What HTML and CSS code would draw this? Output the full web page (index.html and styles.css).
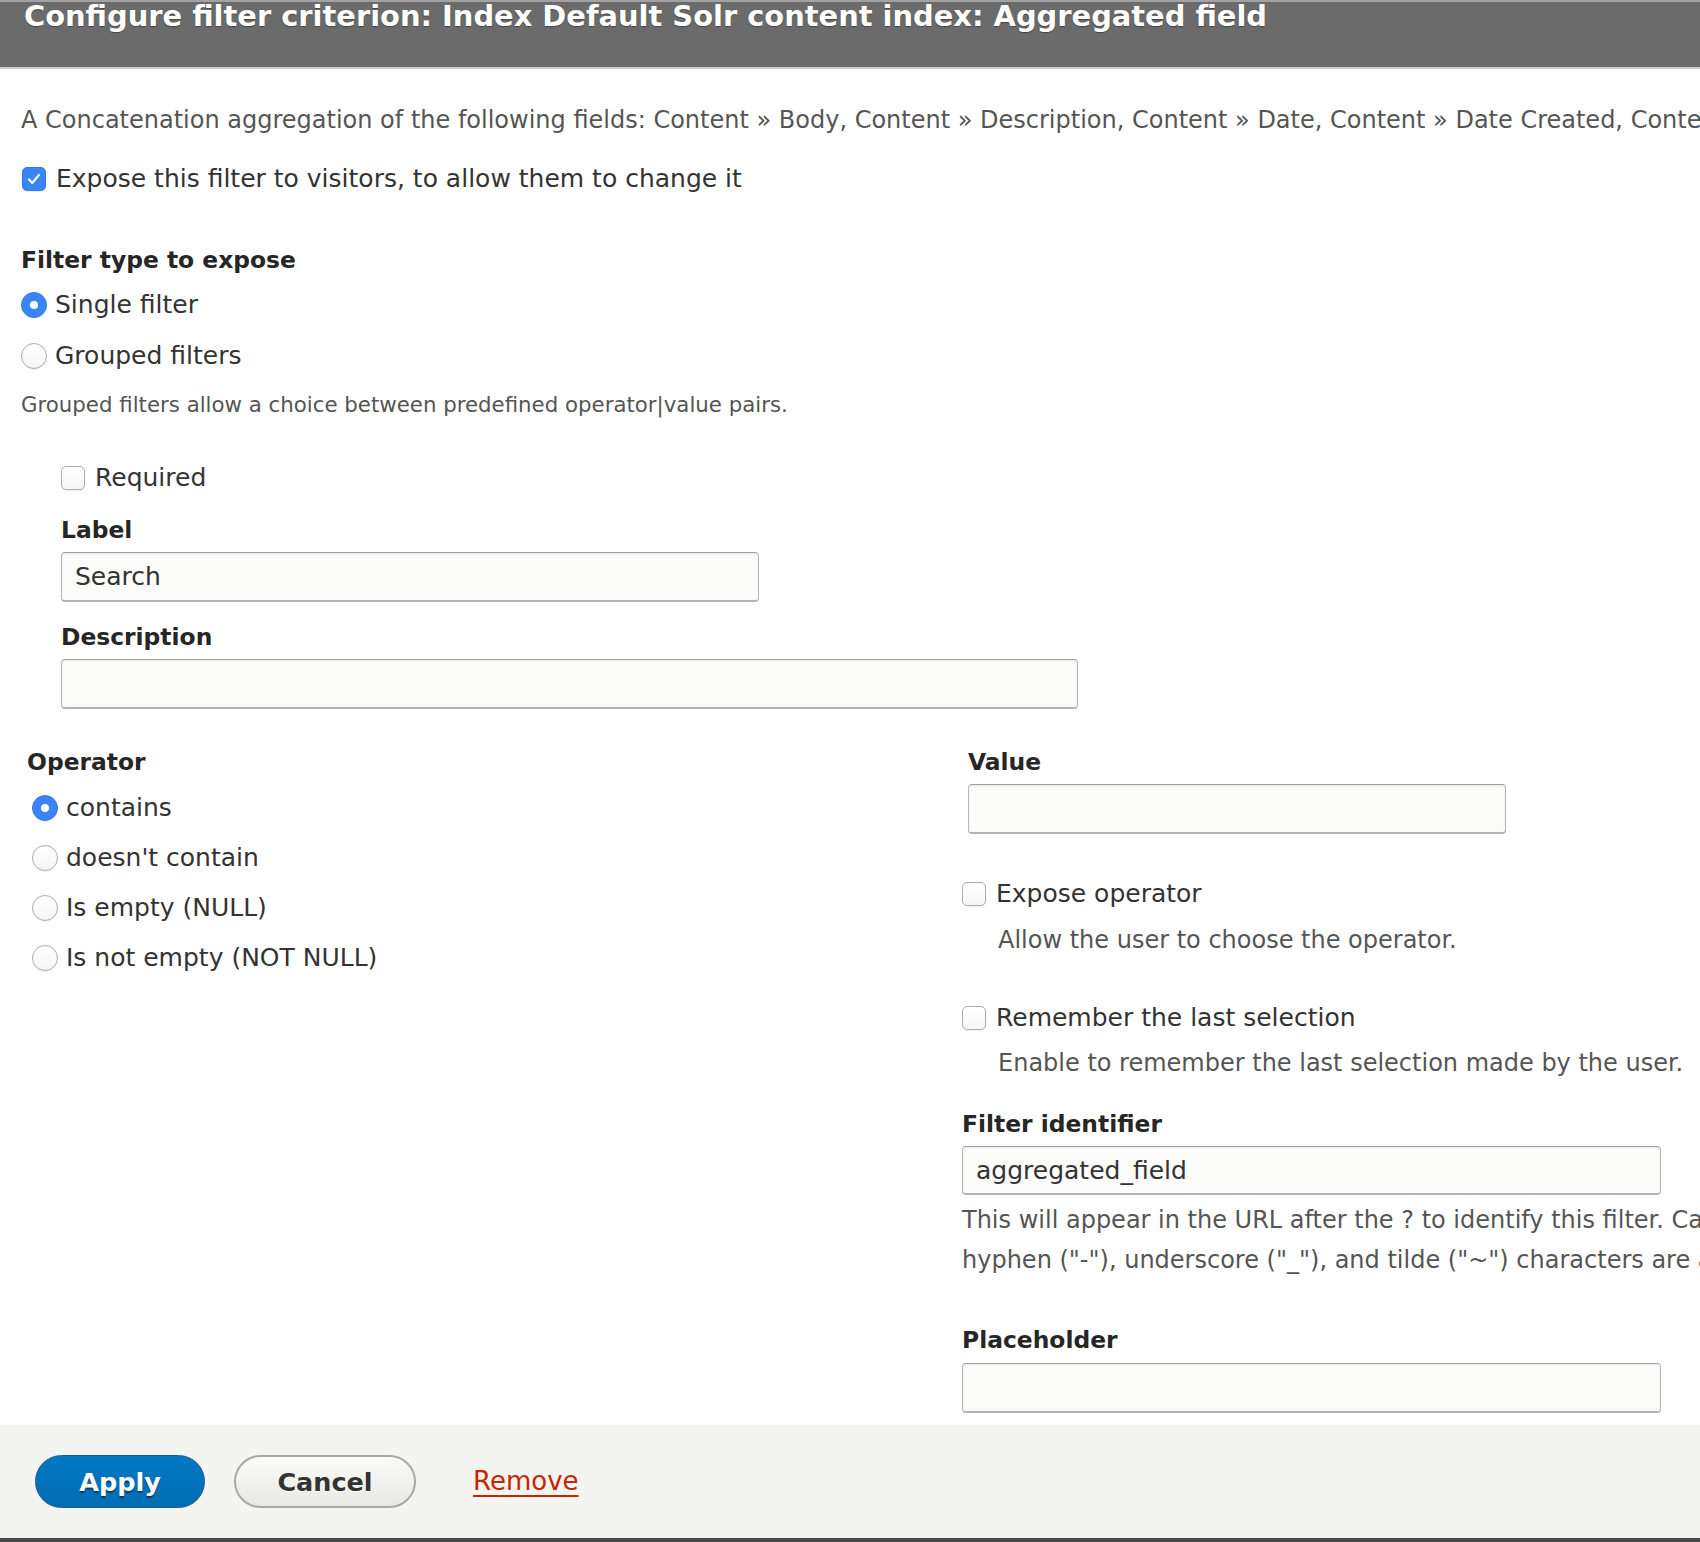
FILE: index.html
```html
<!DOCTYPE html>
<html lang="en">
<head>
<meta charset="utf-8">
<title>Configure filter criterion</title>
<link rel="stylesheet" href="styles.css">
</head>
<body>
<div class="dialog">
  <div class="titlebar">
    <h1 class="title">Configure filter criterion: Index Default Solr content index: Aggregated field</h1>
  </div>

  <div class="content">
    <p class="desc intro">A Concatenation aggregation of the following fields: Content » Body, Content » Description, Content » Date, Content » Date Created, Content » Title, Content » URL, Content » Author</p>

    <div class="row expose-row">
      <span class="cb cb-checked"><svg viewBox="0 0 24 24" width="24" height="24"><path d="M6.5 12.5l3.6 3.8L17.5 7.5" fill="none" stroke="#fff" stroke-width="2.4" stroke-linecap="round" stroke-linejoin="round"/></svg></span>
      <span class="row-text">Expose this filter to visitors, to allow them to change it</span>
    </div>

    <div class="label filter-type-label">Filter type to expose</div>
    <div class="row radio-row single-row">
      <span class="rb rb-checked"></span>
      <span class="row-text rb-text">Single filter</span>
    </div>
    <div class="row radio-row grouped-row">
      <span class="rb"></span>
      <span class="row-text rb-text">Grouped filters</span>
    </div>
    <p class="desc grouped-desc">Grouped filters allow a choice between predefined operator|value pairs.</p>

    <div class="indented">
      <div class="row required-row">
        <span class="cb"></span>
        <span class="row-text">Required</span>
      </div>
      <div class="label label-label">Label</div>
      <div class="field field-label">Search</div>
      <div class="label desc-label">Description</div>
      <div class="field field-desc"></div>
    </div>

    <div class="columns">
      <div class="col-left">
        <div class="label">Operator</div>
        <div class="op-list">
          <div class="row op-row"><span class="rb rb-checked"></span><span class="row-text rb-text">contains</span></div>
          <div class="row op-row"><span class="rb"></span><span class="row-text rb-text">doesn't contain</span></div>
          <div class="row op-row"><span class="rb"></span><span class="row-text rb-text">Is empty (NULL)</span></div>
          <div class="row op-row op-last"><span class="rb"></span><span class="row-text rb-text">Is not empty (NOT NULL)</span></div>
        </div>
      </div>

      <div class="col-right">
        <div class="value-wrap">
          <div class="label">Value</div>
          <div class="field field-value"></div>
        </div>

        <div class="row expose-op-row">
          <span class="cb"></span>
          <span class="row-text">Expose operator</span>
        </div>
        <p class="desc sub-desc allow-desc">Allow the user to choose the operator.</p>

        <div class="row remember-row">
          <span class="cb"></span>
          <span class="row-text">Remember the last selection</span>
        </div>
        <p class="desc sub-desc enable-desc">Enable to remember the last selection made by the user.</p>

        <div class="label ident-label">Filter identifier</div>
        <div class="field field-ident">aggregated_field</div>
        <p class="desc ident-desc">This will appear in the URL after the ? to identify this filter. Cannot be blank. Only letters, digits and the dot ("."),<br>hyphen ("-"), underscore ("_"), and tilde ("~") characters are allowed.</p>

        <div class="label placeholder-label">Placeholder</div>
        <div class="field field-placeholder"></div>
      </div>
    </div>
  </div>

  <div class="footer">
    <span class="btn btn-primary">Apply</span>
    <span class="btn btn-secondary">Cancel</span>
    <a class="remove-link" href="#">Remove</a>
  </div>
</div>
</body>
</html>
```

FILE: styles.css
```css
html, body {
  margin: 0;
  padding: 0;
}

body {
  width: 1700px;
  height: 1542px;
  overflow: hidden;
  background: #ffffff;
  font-family: "DejaVu Sans", "Liberation Sans", sans-serif;
  font-size: 25px;
  color: #333333;
}

.dialog {
  display: flex;
  flex-direction: column;
  height: 1542px;
}

/* Title bar */
.titlebar {
  height: 67px;
  flex: none;
  background: #6b6b6b;
  border-bottom: 2px solid #cdcdcd;
  box-shadow: inset 0 2px 0 #a2a2a2;
  overflow: hidden;
}

.title {
  margin: 0;
  padding-left: 24px;
  font-size: 28.9px;
  line-height: 32px;
  font-weight: bold;
  color: #ffffff;
  white-space: nowrap;
  text-shadow: 0 1px 1px rgba(0, 0, 0, 0.35);
}

/* Content */
.content {
  flex: 1;
  padding: 0 21px;
  overflow: hidden;
}

p {
  margin: 0;
}

.desc {
  font-size: 24px;
  line-height: 30px;
  color: #555555;
  white-space: nowrap;
}

.label {
  font-size: 23.4px;
  line-height: 30px;
  font-weight: bold;
  color: #262626;
  white-space: nowrap;
}

.row {
  display: flex;
  align-items: center;
  height: 30px;
  line-height: 30px;
  white-space: nowrap;
}

.row-text {
  margin-left: 10px;
}

.rb-text {
  margin-left: 8px;
}

/* checkboxes */
.cb {
  box-sizing: border-box;
  flex: none;
  width: 24px;
  height: 24px;
  border-radius: 5px;
  background: linear-gradient(#ffffff, #f6f6f6);
  border: 1px solid #adadad;
  box-shadow: 0 1px 1px rgba(0, 0, 0, 0.06);
  display: flex;
  align-items: center;
  justify-content: center;
}

.cb-checked {
  background: #3a84f6;
  border: 1px solid #3279e9;
}

.cb svg {
  display: block;
}

/* radios */
.rb {
  box-sizing: border-box;
  flex: none;
  width: 26px;
  height: 26px;
  border-radius: 50%;
  background: linear-gradient(#ffffff, #f5f5f5);
  border: 1px solid #acacac;
  box-shadow: 0 1px 1px rgba(0, 0, 0, 0.05);
  position: relative;
}

.rb-checked {
  background: #3a84f6;
  border: 1px solid #3279e9;
}

.rb-checked::after {
  content: "";
  position: absolute;
  left: 50%;
  top: 50%;
  width: 8px;
  height: 8px;
  margin: -4px 0 0 -4px;
  border-radius: 50%;
  background: #ffffff;
}

/* fields */
.field {
  box-sizing: border-box;
  height: 50px;
  line-height: 48px;
  padding-left: 13px;
  border: 1px solid #b6b6b6;
  border-top-color: #a0a0a0;
  border-bottom: 2px solid #b3b3b3;
  border-radius: 4px;
  background: #fbfbfa;
  box-shadow: inset 0 1px 2px rgba(0, 0, 0, 0.08);
  font-size: 25px;
  color: #333333;
  white-space: nowrap;
}

/* vertical rhythm */
.intro { margin-top: 36px; }
.expose-row { margin-top: 29px; margin-left: 1px; }
.filter-type-label { margin-top: 51px; }
.single-row { margin-top: 15px; }
.grouped-row { margin-top: 21px; }
.grouped-desc { margin-top: 19px; font-size: 21.3px; }

.indented {
  padding-left: 40px;
}

.required-row { margin-top: 43px; }
.label-label { margin-top: 22px; }
.field-label { margin-top: 7px; width: 698px; }
.desc-label { margin-top: 20px; }
.field-desc { margin-top: 7px; width: 1017px; }

.columns {
  display: flex;
  margin-top: 38px;
}

.col-left {
  flex: none;
  width: 935px;
  margin-left: 6px;
}

.op-list {
  margin-top: 16px;
  padding-left: 5px;
}

.op-row {
  margin-bottom: 20px;
}

.col-right {
  flex: 1;
  min-width: 0;
}

.value-wrap {
  margin-left: 6px;
}

.field-value { margin-top: 7px; width: 538px; }

.expose-op-row { margin-top: 45px; }
.sub-desc { padding-left: 36px; }
.allow-desc { margin-top: 16px; }
.remember-row { margin-top: 48px; }
.enable-desc { margin-top: 15px; }
.ident-label { margin-top: 31px; }
.field-ident { margin-top: 7px; width: 699px; height: 49px; line-height: 47px; }
.ident-desc { margin-top: 5px; line-height: 40px; }
.placeholder-label { margin-top: 45px; }
.field-placeholder { margin-top: 8px; width: 699px; }

/* footer */
.footer {
  box-sizing: border-box;
  flex: none;
  height: 117px;
  padding-top: 30px;
  background: #f4f4f0;
  border-bottom: 4px solid #474747;
  display: flex;
  align-items: flex-start;
}

.btn {
  box-sizing: border-box;
  height: 53px;
  border-radius: 27px;
  display: flex;
  align-items: center;
  justify-content: center;
  font-size: 25.5px;
  font-weight: bold;
}

.btn-primary {
  width: 170px;
  margin-left: 35px;
  background: linear-gradient(#0079c4, #006db3);
  border: 1px solid #1d5b8f;
  color: #ffffff;
  text-shadow: 0 2px 1px rgba(0, 0, 0, 0.45);
}

.btn-secondary {
  width: 182px;
  margin-left: 29px;
  background: linear-gradient(#fbfbf9, #e8e8e4);
  border: 2px solid #a8a8a8;
  color: #333333;
  text-shadow: 0 1px 0 #ffffff;
}

.remove-link {
  margin-left: 57px;
  height: 53px;
  line-height: 53px;
  font-size: 26px;
  color: #c82400;
  text-decoration: underline;
  text-underline-offset: 5px;
}
```
